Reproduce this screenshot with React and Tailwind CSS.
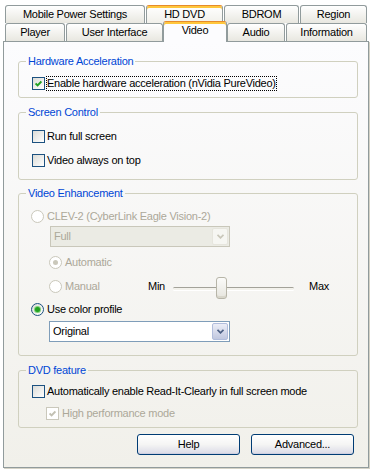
import React from "react";

const FONT = "font-['Liberation_Sans',Arial,sans-serif]";
const DIM = "text-[#aca899]";

/* ── Tabs ── */
const Tab = ({ label, w, active, hot, className = "" }) => (
  <div
    className={`${w} ${className} flex justify-center rounded-t-[3px] border border-b-0 border-[#919b9c] text-[11px] leading-[15px] text-black
      ${
        active
          ? "relative top-[1px] z-10 h-[21px] items-start pt-[1px] border-t-[#e68b2c] bg-[#fcfcfe] shadow-[inset_0_2px_0_#ffc73c]"
          : hot
          ? "h-[18px] items-center border-t-[#e68b2c] bg-linear-to-b from-white to-[#f1f0ea] shadow-[inset_0_2px_0_#ffc73c]"
          : "h-[18px] items-center bg-linear-to-b from-white to-[#e8e7e0]"
      }`}
  >
    {label}
  </div>
);

/* ── XP controls ── */
const Checkbox = ({ checked, disabled }) => (
  <span
    className={`flex h-[13px] w-[13px] shrink-0 items-center justify-center border ${
      disabled
        ? "border-[#cac8bb] bg-white"
        : "border-[#1c5180] bg-linear-to-br from-[#dcdcd7] to-white"
    }`}
  >
    {checked && (
      <svg width="7" height="7" viewBox="0 0 7 7">
        <path
          d="M0.6 3.4 L2.6 5.4 L6.4 1.4"
          fill="none"
          stroke={disabled ? "#c2c0b2" : "#21a121"}
          strokeWidth="1.9"
        />
      </svg>
    )}
  </span>
);

const Radio = ({ checked, disabled }) => (
  <span
    className={`flex h-[13px] w-[13px] shrink-0 items-center justify-center rounded-full border ${
      disabled
        ? "border-[#cac8bb] bg-white"
        : "border-[#1c5180] bg-linear-to-br from-[#dcdcd7] to-white"
    }`}
  >
    {checked && (
      <span
        className={`h-[5px] w-[5px] rounded-full ${
          disabled ? "bg-[#cac8bb]" : "bg-[#21a121] shadow-[0_0_0_1px_#7fd27a]"
        }`}
      />
    )}
  </span>
);

const Combo = ({ value, disabled, className = "" }) => (
  <div
    className={`flex h-[21px] items-stretch border p-[1px] ${
      disabled
        ? "border-[#c9c7ba] bg-[#ebebe4] text-[#aca899]"
        : "border-[#7f9db9] bg-white text-black"
    } ${className}`}
  >
    <span className="flex-1 pl-[2px] leading-[17px]">{value}</span>
    <span
      className={`flex w-[16px] items-center justify-center rounded-[2px] border ${
        disabled
          ? "border-[#e6e5dd] bg-[#f6f6f2]"
          : "border-[#b1bddc] bg-linear-to-b from-[#eceef7] to-[#c0c7df]"
      }`}
    >
      <svg width="7" height="5" viewBox="0 0 7 5">
        <path
          d="M0.5 0.8 L3.5 3.8 L6.5 0.8"
          fill="none"
          stroke={disabled ? "#c9c7ba" : "#4d6185"}
          strokeWidth="1.8"
        />
      </svg>
    </span>
  </div>
);

const Group = ({ title, className = "", inner = "", children }) => (
  <fieldset className={`rounded-[3px] border border-[#d0d0bf] ${className}`}>
    <legend className="ml-[7px] px-[2px] text-[11px] leading-[13px] text-[#0046d5]">
      {title}
    </legend>
    <div className={`pl-[12px] ${inner}`}>{children}</div>
  </fieldset>
);

const Row = ({ className = "", gap = "gap-[3px]", children }) => (
  <div className={`flex h-[15px] items-center leading-[15px] ${gap} ${className}`}>
    {children}
  </div>
);

const XPButton = ({ children }) => (
  <button
    type="button"
    className="h-[21px] w-[103px] rounded-[3px] border border-[#003c74] bg-linear-to-b from-white via-[#f5f5f4] to-[#dadae6] text-[11px] leading-[15px] text-black shadow-[inset_0_-1px_0_#cfcfe0]"
  >
    {children}
  </button>
);

export default function App() {
  return (
    <div
      className={`${FONT} h-[472px] w-[374px] bg-white pt-[5px] text-[11px] tracking-[-0.25px] text-black`}
    >
      {/* ── Tab rows ── */}
      <div className="ml-[5px] flex h-[18px] gap-[1px]">
        <Tab label="Mobile Power Settings" w="w-[140px]" />
        <Tab label="HD DVD" w="w-[77px]" hot />
        <Tab label="BDROM" w="w-[75px]" />
        <Tab label="Region" w="w-[67px]" />
      </div>
      <div className="ml-[5px] flex h-[18px] items-end">
        <Tab label="Player" w="w-[60px]" />
        <Tab label="User Interface" w="w-[97px]" className="ml-[1px]" />
        <Tab label="Video" w="w-[64px]" active />
        <Tab label="Audio" w="w-[58px]" />
        <Tab label="Information" w="w-[81px]" className="ml-[1px]" />
      </div>

      {/* ── Page ── */}
      <div className="ml-[3px] flex h-[427px] w-[366px] flex-col border border-[#919b9c] bg-linear-to-b from-[#fcfcfe] to-[#f1f0ea] pl-[14px] pr-[10px] pt-[13px] shadow-[1px_1px_0_#d4d2c6]">
        <Group title="Hardware Acceleration" inner="pt-[8px] pb-[6px]">
          <Row gap="gap-[1px]">
            <span className="ml-[1px] flex">
              <Checkbox checked />
            </span>
            <span className="border border-dotted border-black leading-[13px]">
              Enable hardware acceleration (nVidia PureVideo)
            </span>
          </Row>
        </Group>

        <Group title="Screen Control" className="mt-[8px]" inner="pt-[10px] pb-[11px]">
          <Row gap="gap-[2px]">
            <span className="ml-[1px] flex">
              <Checkbox />
            </span>
            <span>Run full screen</span>
          </Row>
          <Row gap="gap-[2px]" className="mt-[9px]">
            <span className="ml-[1px] flex">
              <Checkbox />
            </span>
            <span>Video always on top</span>
          </Row>
        </Group>

        <Group title="Video Enhancement" className="mt-[7px]" inner="pt-[9px] pb-[13px]">
          <Row>
            <Radio disabled />
            <span className={DIM}>CLEV-2 (CyberLink Eagle Vision-2)</span>
          </Row>
          <Combo value="Full" disabled className="ml-[19px] mt-[2px] w-[180px]" />
          <Row className="ml-[18px] mt-[8px]">
            <Radio checked disabled />
            <span className={DIM}>Automatic</span>
          </Row>
          <div className="ml-[18px] mt-[7px] flex h-[22px] items-start">
            <Row className="mt-[2px] w-[99px]">
              <Radio disabled />
              <span className={DIM}>Manual</span>
            </Row>
            <span className="mt-[2px] w-[18px] leading-[15px]">Min</span>
            <div className="relative ml-[7px] h-[22px] w-[121px]">
              <div className="absolute left-0 right-0 top-[10px] h-[3px] rounded-full border-t border-[#a3a299] bg-[#f3f2ec] shadow-[0_1px_0_#ffffff]" />
              <div className="absolute left-[43px] top-0 h-[22px] w-[11px] rounded-[3px] border border-[#b7b5a8] bg-linear-to-b from-[#fbfbf9] to-[#e6e5de] shadow-[inset_0_-2px_0_#d8d6cb]" />
            </div>
            <span className="ml-[15px] mt-[2px] leading-[15px]">Max</span>
          </div>
          <Row className="mt-[3px]">
            <Radio checked />
            <span>Use color profile</span>
          </Row>
          <Combo value="Original" className="ml-[18px] mt-[4px] w-[181px]" />
        </Group>

        <Group title="DVD feature" className="mt-[8px]" inner="pt-[7px] pb-[6px]">
          <Row gap="gap-[2px]">
            <span className="ml-[1px] flex">
              <Checkbox />
            </span>
            <span>Automatically enable Read-It-Clearly in full screen mode</span>
          </Row>
          <Row className="ml-[15px] mt-[7px]">
            <Checkbox checked disabled />
            <span className={DIM}>High performance mode</span>
          </Row>
        </Group>

        <div className="mt-[6px] flex justify-end gap-[11px] pr-[4px]">
          <XPButton>Help</XPButton>
          <XPButton>Advanced...</XPButton>
        </div>
      </div>
    </div>
  );
}
